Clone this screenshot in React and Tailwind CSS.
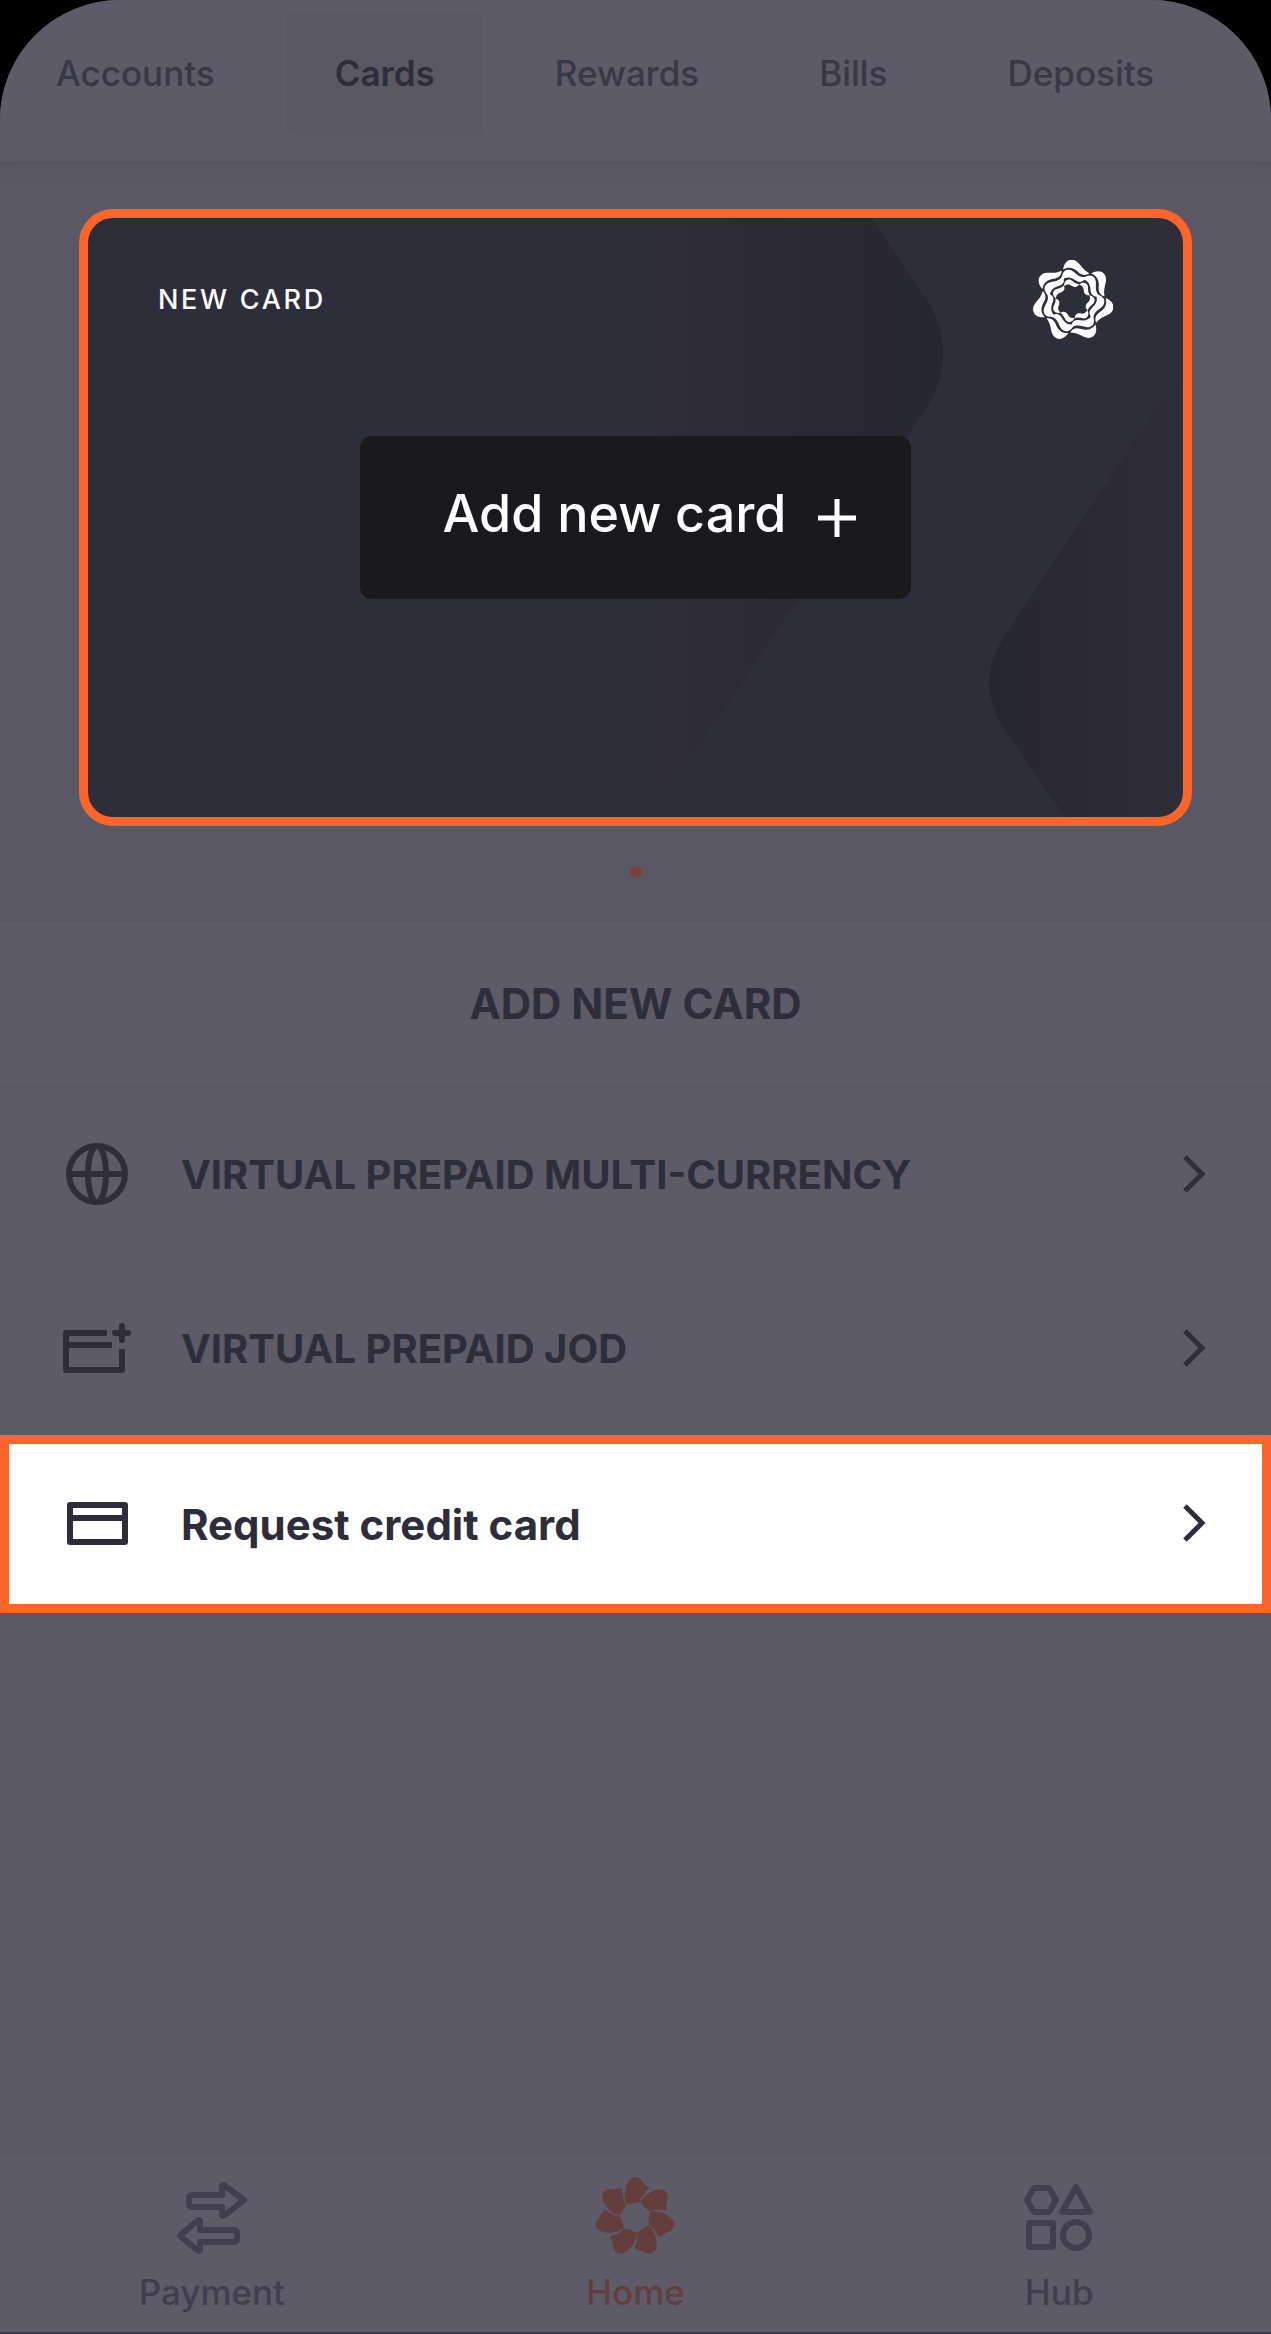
const tabs = ['Accounts', 'Cards', 'Rewards', 'Bills', 'Deposits']

const turns = [0, 1, 2, 3, 4, 5, 6].map((n) => (n * 360) / 7)

const Emblem = () => (
  <svg className="size-20 shrink-0 text-white" viewBox="-118 -120 236 236" fill="currentColor" aria-hidden="true">
    {turns.map((deg) => (
      <g key={deg} transform={`rotate(${deg})`}>
        <path d="M-29 -92C-27 -109 -17 -121 -4 -121C11 -121 18 -109 26 -99C33 -90 40 -85 48 -81C38 -73 26 -75 16 -84C3 -97 -12 -102 -29 -92Z" />
        <path d="M-33 -61C-34 -80 -26 -94 -10 -91C4 -87 9 -76 22 -71C28 -69 34 -69 39 -71C33 -56 22 -51 11 -58C-3 -68 -17 -74 -33 -61Z" />
        <path d="M-26 -43C-27 -57 -17 -66 -6 -61C2 -56 8 -49 18 -49C13 -39 5 -38 -3 -43C-10 -49 -18 -50 -26 -43Z" />
      </g>
    ))}
  </svg>
)

const Flower = () => (
  <svg className="size-20" viewBox="-118 -118 236 236" fill="currentColor" aria-hidden="true">
    {turns.map((deg) => (
      <path
        key={deg}
        transform={`rotate(${deg})`}
        d="M-26 -40C-34 -62 -31 -90 -18 -108C-10 -121 8 -121 17 -110C26 -98 33 -92 42 -83C30 -72 18 -60 14 -44C0 -41 -12 -38 -26 -40Z"
      />
    ))}
  </svg>
)

const Arrows = () => (
  <svg className="size-20" viewBox="0 0 80 80" fill="none" stroke="currentColor" strokeWidth="6" strokeLinejoin="round" aria-hidden="true">
    <path d="M21 18H50V9.500Q50 7 53 9L72 23L53 38Q50 40 50 37.500V30H21Q17 30 17 27V21Q17 18 21 18Z" />
    <path d="M61 53H28V44.500Q28 42 25 44L8 58.500L25 73Q28 75 28 72V65H61Q65 65 65 62V56Q65 53 61 53Z" />
  </svg>
)

const Shapes = () => (
  <svg className="size-20" viewBox="0 0 80 80" fill="none" stroke="currentColor" strokeWidth="6" strokeLinejoin="round" aria-hidden="true">
    <path d="M15 11H30L37 23L30 35H15L8 23Z" />
    <path d="M57 10L71 35H43Z" />
    <rect x="10" y="46" width="24" height="24" rx="1" />
    <circle cx="57" cy="58" r="13" />
  </svg>
)

const Globe = () => (
  <svg className="size-[72px]" viewBox="0 0 72 72" fill="none" stroke="currentColor" strokeWidth="6" aria-hidden="true">
    <circle cx="36" cy="35" r="28" />
    <ellipse cx="36" cy="35" rx="9" ry="28" />
    <path d="M8 35H64" />
  </svg>
)

const CardPlus = () => (
  <svg className="size-[72px]" viewBox="0 0 72 72" fill="none" stroke="currentColor" strokeWidth="6" strokeLinejoin="round" aria-hidden="true">
    <path d="M46 20H5V57H61V36M5 32H51" />
    <path d="M61 13V27M54 20H67" strokeLinecap="round" />
  </svg>
)

const CardOutline = () => (
  <svg className="size-[72px]" viewBox="0 0 72 72" fill="none" stroke="currentColor" strokeWidth="6" strokeLinejoin="round" aria-hidden="true">
    <path d="M9 17H64V54H9ZM9 30H64" />
  </svg>
)

const Chevron = () => (
  <svg className="mr-1 ml-auto h-10 w-6 shrink-0" viewBox="0 0 24 40" fill="none" stroke="currentColor" strokeWidth="5" aria-hidden="true">
    <path d="M3 2L20 19L3 36" />
  </svg>
)

// faded chevrons behind the card content
const CardPattern = () => (
  <svg className="absolute inset-0 size-full" viewBox="0 0 1096 600" preserveAspectRatio="xMidYMid slice" aria-hidden="true">
    <defs>
      <linearGradient id="fadeLeft" gradientUnits="userSpaceOnUse" x1="560" y1="0" x2="850" y2="0">
        <stop offset="0" stopColor="#262630" stopOpacity="0" />
        <stop offset="1" stopColor="#262630" />
      </linearGradient>
      <linearGradient id="fadeRight" gradientUnits="userSpaceOnUse" x1="902" y1="0" x2="1110" y2="0">
        <stop offset="0" stopColor="#262630" />
        <stop offset="1" stopColor="#262630" stopOpacity="0" />
      </linearGradient>
    </defs>
    <path fill="url(#fadeLeft)" d="M560 0H784L844 89Q868 136 844 183L560 605Z" />
    <path fill="url(#fadeRight)" d="M1096 150L914 424Q890 464 914 508L978 600H1096Z" />
  </svg>
)

const options = [
  { label: 'VIRTUAL PREPAID MULTI-CURRENCY', Icon: Globe },
  { label: 'VIRTUAL PREPAID JOD', Icon: CardPlus },
]

const navItems = [
  { label: 'Payment', Icon: Arrows, color: 'text-[#413f4d]' },
  { label: 'Home', Icon: Flower, color: 'text-[#643e3d]' },
  { label: 'Hub', Icon: Shapes, color: 'text-[#413f4d]' },
]

const App = () => {
  return (
    <div className="bg-black font-[Inter,sans-serif] text-[#2e2d3a]">
      <div className="flex min-h-screen flex-col overflow-hidden rounded-t-[120px] bg-[#595864]">
        <header className="bg-[#5c5b67] pt-3 pb-[26px] shadow-[0_4px_12px_#565561]">
          <nav className="flex gap-6 pl-2">
            {tabs.map((tab) => (
              <a
                key={tab}
                href="#"
                className={
                  tab === 'Cards'
                    ? 'rounded-md bg-[#5a5961] px-12 py-9 text-[35px] leading-[51px] font-semibold'
                    : 'px-12 py-9 text-[35px] leading-[51px] font-medium text-[#393845]'
                }
              >
                {tab}
              </a>
            ))}
          </nav>
        </header>

        <main>
          <section className="px-[79px] pt-12">
            <div className="relative overflow-hidden rounded-[34px] border-[9px] border-[#fd652a] bg-[#2e2d3a] pt-[42px] pb-[218px] text-white">
              <CardPattern />
              <div className="relative flex items-center justify-between px-[70px]">
                <h2 className="text-[27px] font-medium tracking-widest">NEW CARD</h2>
                <Emblem />
              </div>
              <button className="relative mx-auto mt-24 flex h-[163px] items-center gap-8 rounded-xl bg-[#1a191d] pr-[55px] pl-[83px] text-[52px] font-medium">
                <span className="pb-2">Add new card</span>
                <svg className="size-[38px]" viewBox="0 0 38 38" stroke="currentColor" strokeWidth="5" aria-hidden="true">
                  <path d="M19 0V38M0 19H38" />
                </svg>
              </button>
            </div>
            <div className="mx-auto mt-10 size-3 rounded-full bg-[#7a4239]" />
          </section>

          <section className="mt-11 bg-[#5c5b67]">
            <h1 className="border-b-2 border-[#5a5965] py-[52px] text-center text-[42px] leading-[60px] font-bold">ADD NEW CARD</h1>
            {options.map(({ label, Icon }, i) => (
              <button
                key={label}
                className={
                  i === 0
                    ? 'flex h-[175px] w-full items-center gap-12 border-b-2 border-[#5a5965] px-[61px] text-left text-[40px] font-bold'
                    : 'flex h-[172px] w-full items-center gap-12 px-[61px] text-left text-[40px] font-bold'
                }
              >
                <Icon />
                {label}
                <Chevron />
              </button>
            ))}
            <button className="flex h-[178px] w-full items-center gap-12 border-[9px] border-[#fd652a] bg-white px-[52px] text-left text-[42px] font-bold">
              <CardOutline />
              Request credit card
              <Chevron />
            </button>
          </section>
        </main>

        <footer className="mt-auto border-b-2 border-[#3d3b49] bg-[#5c5b67]">
          <nav className="grid grid-cols-3 pt-[22px] pb-[13px]">
            {navItems.map(({ label, Icon, color }) => (
              <a key={label} href="#" className={`flex flex-col items-center gap-2 text-[35px] leading-[54px] font-medium ${color}`}>
                <Icon />
                {label}
              </a>
            ))}
          </nav>
        </footer>
      </div>
    </div>
  )
}

export default App
